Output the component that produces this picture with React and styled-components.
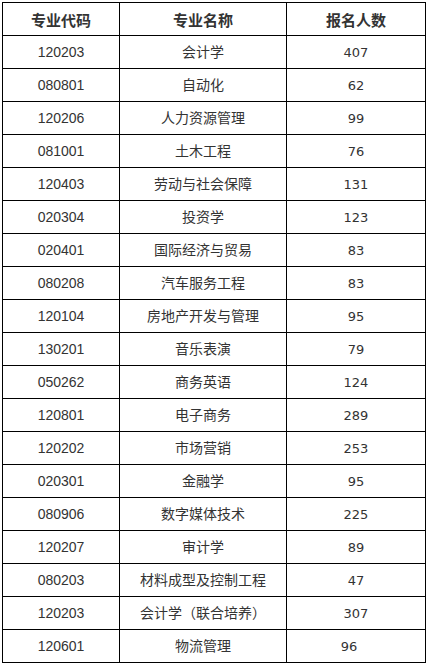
import React from 'react';
import styled, { createGlobalStyle } from 'styled-components';

const GlobalStyle = createGlobalStyle`
  body {
    margin: 0;
    padding: 2px;
    background: #fff;
    font-family: "Liberation Sans", "Noto Sans CJK SC", sans-serif;
  }
`;

const rows = [
  ['120203', '会计学', '407'],
  ['080801', '自动化', '62'],
  ['120206', '人力资源管理', '99'],
  ['081001', '土木工程', '76'],
  ['120403', '劳动与社会保障', '131'],
  ['020304', '投资学', '123'],
  ['020401', '国际经济与贸易', '83'],
  ['080208', '汽车服务工程', '83'],
  ['120104', '房地产开发与管理', '95'],
  ['130201', '音乐表演', '79'],
  ['050262', '商务英语', '124'],
  ['120801', '电子商务', '289'],
  ['120202', '市场营销', '253'],
  ['020301', '金融学', '95'],
  ['080906', '数字媒体技术', '225'],
  ['120207', '审计学', '89'],
  ['080203', '材料成型及控制工程', '47'],
  ['120203', '会计学（联合培养）', '307'],
  ['120601', '物流管理', '96', true],
];

function App() {
  return (
    <>
      <GlobalStyle />
      <Table>
        <colgroup>
          <col style={{ width: 117 }} />
          <col style={{ width: 167 }} />
          <col style={{ width: 139 }} />
        </colgroup>
        <thead>
          <tr>
            <Th>专业代码</Th>
            <Th>专业名称</Th>
            <Th>报名人数</Th>
          </tr>
        </thead>
        <tbody>
          {rows.map((r, i) => (
            <tr key={i}>
              <Td>{r[0]}</Td>
              <Td>{r[1]}</Td>
              <Td $num $shift={r[3]}>{r[2]}</Td>
            </tr>
          ))}
        </tbody>
      </Table>
    </>
  );
}
export default App;

const Table = styled.table`
  border-collapse: collapse;
  table-layout: fixed;
  width: 423px;
`;

const Th = styled.th`
  height: 32px;
  padding: 0;
  border: 1px solid #000;
  font-family: "Noto Sans CJK SC", sans-serif;
  font-size: 15px;
  font-weight: bold;
  color: #333;
  text-align: center;
  vertical-align: middle;
`;

const Td = styled.td`
  height: 32px;
  padding: 0 ${(p) => (p.$shift ? '14px' : '0')} 0 0;
  border: 1px solid #000;
  font-family: ${(p) =>
    p.$num ? '"DejaVu Sans", "Noto Sans CJK SC", sans-serif' : '"Liberation Sans", "Noto Sans CJK SC", sans-serif'};
  font-size: ${(p) => (p.$num ? '13px' : '14px')};
  color: #333;
  text-align: center;
  vertical-align: middle;
  line-height: 1;
`;
